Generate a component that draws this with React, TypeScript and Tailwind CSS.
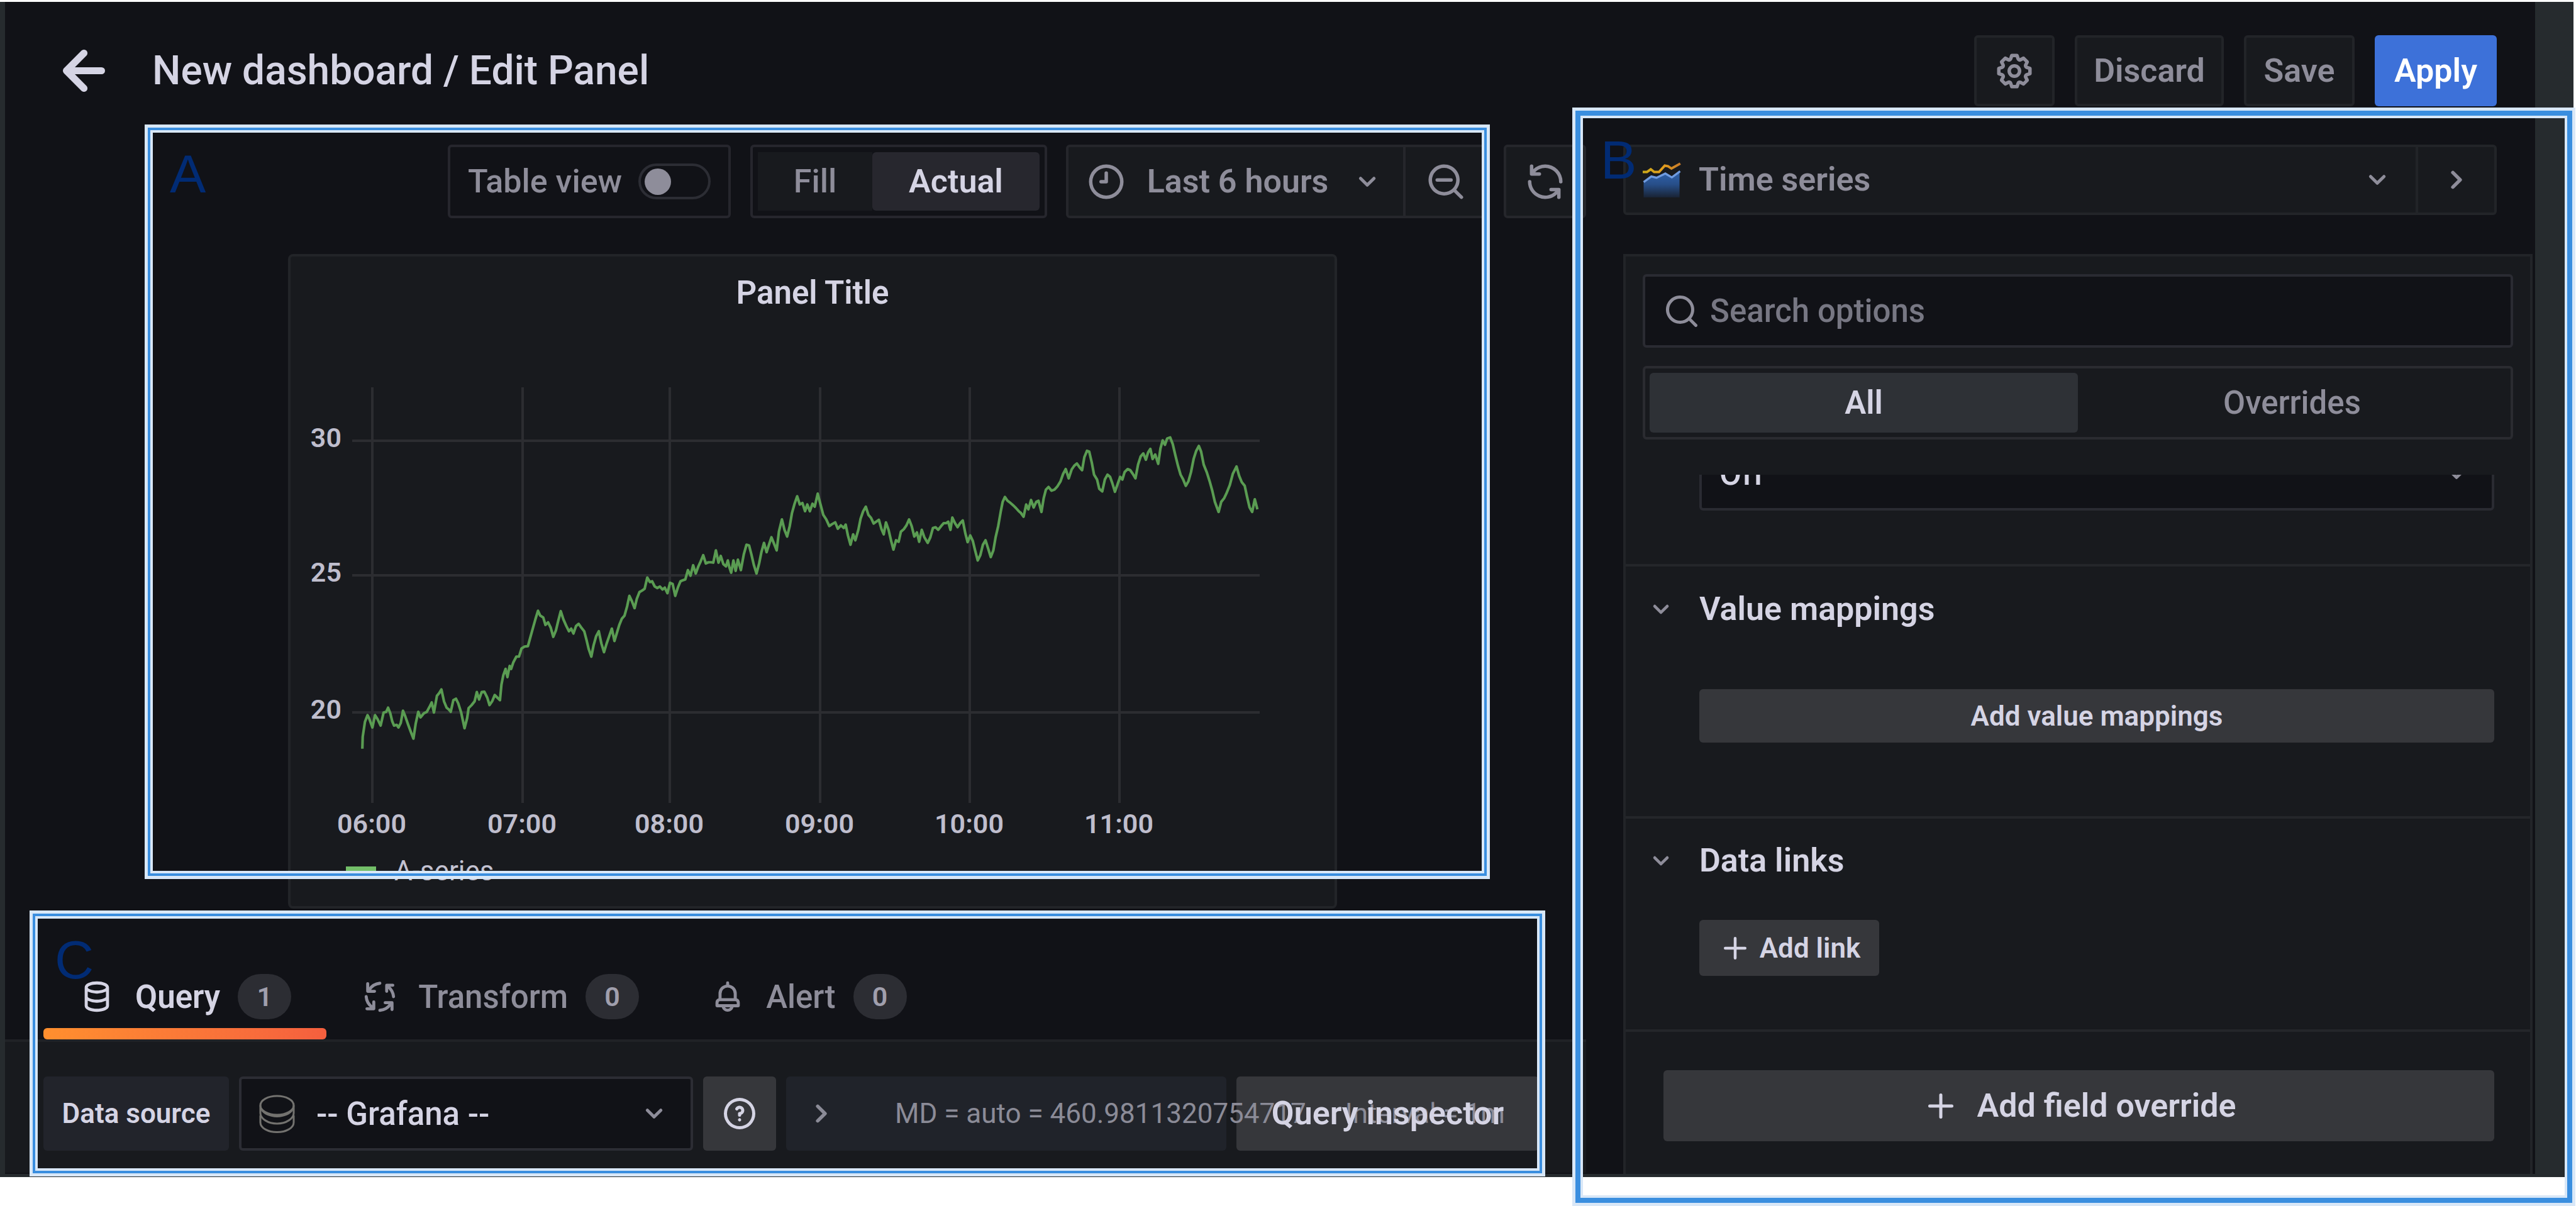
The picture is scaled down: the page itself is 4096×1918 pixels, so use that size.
import React from "react";

const paths = {
  arrowLeft:
    "M17,11H9.41l3.3-3.29a1,1,0,1,0-1.42-1.42l-5,5a1,1,0,0,0-.21.33,1,1,0,0,0,0,.76,1,1,0,0,0,.21.33l5,5a1,1,0,0,0,1.42,0,1,1,0,0,0,0-1.42L9.41,13H17a1,1,0,0,0,0-2Z",
  angleDown:
    "M17,9.17a1,1,0,0,0-1.41,0L12,12.71,8.46,9.17a1,1,0,0,0-1.41,0,1,1,0,0,0,0,1.42l4.24,4.24a1,1,0,0,0,1.42,0L17,10.59A1,1,0,0,0,17,9.17Z",
  angleRight:
    "M14.83,11.29,10.59,7.05a1,1,0,0,0-1.42,0,1,1,0,0,0,0,1.41L12.71,12,9.17,15.54a1,1,0,0,0,0,1.41,1,1,0,0,0,.71.29,1,1,0,0,0,.71-.29l4.24-4.24A1,1,0,0,0,14.83,11.29Z",
  plus: "M19,11H13V5a1,1,0,0,0-2,0v6H5a1,1,0,0,0,0,2h6v6a1,1,0,0,0,2,0V13h6a1,1,0,0,0,0-2Z",
  search:
    "M21.71,20.29,18,16.61A9,9,0,1,0,16.61,18l3.68,3.68a1,1,0,0,0,1.42,0A1,1,0,0,0,21.71,20.29ZM11,18a7,7,0,1,1,7-7A7,7,0,0,1,11,18Z",
  searchMinus:
    "M21.71,20.29,18,16.61A9,9,0,1,0,16.61,18l3.68,3.68a1,1,0,0,0,1.42,0A1,1,0,0,0,21.71,20.29ZM11,18a7,7,0,1,1,7-7A7,7,0,0,1,11,18Zm4-8H7a1,1,0,0,0,0,2h8a1,1,0,0,0,0-2Z",
  clock:
    "M12,2A10,10,0,1,0,22,12,10,10,0,0,0,12,2Zm0,18a8,8,0,1,1,8-8A8,8,0,0,1,12,20ZM12,6a1,1,0,0,0-1,1v4H9a1,1,0,0,0,0,2h3a1,1,0,0,0,1-1V7A1,1,0,0,0,12,6Z",
  sync:
    "M19.91,15.51H15.38a1,1,0,0,0,0,2h2.4A8,8,0,0,1,4,12a1,1,0,1,0-2,0,10,10,0,0,0,16.88,7.23V21a1,1,0,0,0,2,0V16.5A1,1,0,0,0,19.91,15.51ZM12,2A10,10,0,0,0,5.12,4.77V3a1,1,0,0,0-2,0V7.5a1,1,0,0,0,1,1h4.5a1,1,0,0,0,0-2H6.22A8,8,0,0,1,20,12a1,1,0,0,0,2,0A10,10,0,0,0,12,2Z",
  cog:
    "M21.32,9.55l-1.89-.63.89-1.78A1,1,0,0,0,20.13,6L18,3.87a1,1,0,0,0-1.15-.19l-1.78.89-.63-1.89A1,1,0,0,0,13.5,2h-3a1,1,0,0,0-.95.68L8.92,4.57,7.14,3.68A1,1,0,0,0,6,3.87L3.87,6a1,1,0,0,0-.19,1.15l.89,1.78-1.89.63A1,1,0,0,0,2,10.5v3a1,1,0,0,0,.68.95l1.89.63-.89,1.78A1,1,0,0,0,3.87,18L6,20.13a1,1,0,0,0,1.15.19l1.78-.89.63,1.89a1,1,0,0,0,.95.68h3a1,1,0,0,0,.95-.68l.63-1.89,1.78.89A1,1,0,0,0,18,20.13L20.13,18a1,1,0,0,0,.19-1.15l-.89-1.78,1.89-.63A1,1,0,0,0,22,13.5v-3A1,1,0,0,0,21.32,9.55ZM20,12.78l-1.2.4A2,2,0,0,0,17.64,16l.57,1.14-1.1,1.1L16,17.64a2,2,0,0,0-2.79,1.16l-.4,1.2H11.22l-.4-1.2A2,2,0,0,0,8,17.64l-1.14.57-1.1-1.1L6.36,16A2,2,0,0,0,5.2,13.18L4,12.78V11.22l1.2-.4A2,2,0,0,0,6.36,8L5.79,6.89l1.1-1.1L8,6.36A2,2,0,0,0,10.82,5.2l.4-1.2h1.56l.4,1.2A2,2,0,0,0,16,6.36l1.14-.57,1.1,1.1L17.64,8a2,2,0,0,0,1.16,2.79l1.2.4ZM12,8a4,4,0,1,0,4,4A4,4,0,0,0,12,8Zm0,6a2,2,0,1,1,2-2A2,2,0,0,1,12,14Z",
  question:
    "M11.29,15.29a1.58,1.58,0,0,0-.12.15.76.76,0,0,0-.09.18.64.64,0,0,0-.06.18,1.36,1.36,0,0,0,0,.2.84.84,0,0,0,.08.38.9.9,0,0,0,.54.54.94.94,0,0,0,.76,0,.9.9,0,0,0,.54-.54A1,1,0,0,0,13,16a1,1,0,0,0-.29-.71A1,1,0,0,0,11.29,15.29ZM12,2A10,10,0,1,0,22,12,10,10,0,0,0,12,2Zm0,18a8,8,0,1,1,8-8A8,8,0,0,1,12,20ZM12,7A3,3,0,0,0,9.4,8.5a1,1,0,1,0,1.73,1A1,1,0,0,1,12,9a1,1,0,0,1,0,2,1,1,0,0,0-1,1v1a1,1,0,0,0,2,0v-.18A3,3,0,0,0,12,7Z",
  bell:
    "M18,13.18V10a6,6,0,0,0-5-5.91V3a1,1,0,0,0-2,0V4.09A6,6,0,0,0,6,10v3.18A3,3,0,0,0,4,16v2a1,1,0,0,0,1,1H8.14a4,4,0,0,0,7.72,0H19a1,1,0,0,0,1-1V16A3,3,0,0,0,18,13.18ZM8,10a4,4,0,0,1,8,0v3H8Zm4,10a2,2,0,0,1-1.72-1h3.44A2,2,0,0,1,12,20Zm6-3H6V16a1,1,0,0,1,1-1H17a1,1,0,0,1,1,1Z",
  database:
    "M12,2C8,2,4,3.37,4,6V18c0,2.63,4,4,8,4s8-1.37,8-4V6C20,3.37,16,2,12,2Zm6,16c0,.71-2.28,2-6,2s-6-1.29-6-2V14.73A13.16,13.16,0,0,0,12,16a13.16,13.16,0,0,0,6-1.27Zm0-6c0,.71-2.28,2-6,2s-6-1.29-6-2V8.73A13.16,13.16,0,0,0,12,10a13.16,13.16,0,0,0,6-1.27ZM12,8C8.28,8,6,6.71,6,6s2.28-2,6-2,6,1.29,6,2S15.72,8,12,8Z",
};

function Icon({ name, className = "size-[60px]" }: { name: keyof typeof paths; className?: string }) {
  return (
    <svg viewBox="0 0 24 24" fill="currentColor" aria-hidden="true" className={`shrink-0 ${className}`}>
      <path d={paths[name]} />
    </svg>
  );
}

function ProcessIcon() {
  return (
    <svg viewBox="0 0 24 24" fill="none" stroke="currentColor" strokeWidth="2" strokeLinecap="round" strokeLinejoin="round" aria-hidden="true" className="size-[58px] shrink-0">
      <path d="M4 3.5V8.500H8.500M5 7.5A9.5 9.5 0 0 1 12 3.200" />
      <path d="M20.5 4.5H16.500V8.500M17.500 5.500A9.5 9.5 0 0 1 21 12" />
      <path d="M15.5 16H20V20.5M19 17A9.5 9.5 0 0 1 12 21" />
      <path d="M3.5 20H8V15.5M7 19A9.5 9.5 0 0 1 3 12" />
    </svg>
  );
}

function GrafanaSourceIcon() {
  return (
    <svg viewBox="0 0 57 61" fill="none" stroke="#73726f" strokeWidth="3" aria-hidden="true" className="h-[61px] w-[57px] shrink-0">
      <ellipse cx="28.5" cy="17" rx="26.5" ry="15" />
      <path d="M2 17V29C2 38 14 46 28.5 46S55 38 55 29V17" />
      <path d="M4 24C8 30 17 34.500 28.500 34.500S49 30 53 24" />
      <path d="M2 33V44C2 53 14 59.500 28.500 59.500S55 53 55 44V33" />
    </svg>
  );
}

function TimeSeriesIcon() {
  return (
    <svg viewBox="0 0 200 185" fill="none" aria-hidden="true" className="h-[57px] w-[61px] shrink-0">
      <defs>
        <linearGradient id="area" x1="0" y1="0" x2="0" y2="1">
          <stop offset="0" stopColor="#3063ad" />
          <stop offset="0.5" stopColor="#274e88" />
          <stop offset="1" stopColor="#192334" />
        </linearGradient>
        <linearGradient id="gold" x1="0" y1="0" x2="1" y2="0">
          <stop offset="0" stopColor="#c9a91a" />
          <stop offset="0.5" stopColor="#e3a01c" />
          <stop offset="1" stopColor="#c87b2a" />
        </linearGradient>
      </defs>
      <path d="M5 103L45 73L72 80L118 58L152 78L192 48V183H5Z" fill="url(#area)" />
      <path d="M5 103L45 73L72 80L118 58L152 78L195 46" stroke="#6f9be0" strokeWidth="11" />
      <path d="M0 50H22L42 36L60 50H85L115 17L132 20L150 32L196 6" stroke="url(#gold)" strokeWidth="13" />
    </svg>
  );
}

const seriesA =
  "265,1067 266,1035 272,995 279,977 283,985 292,1010 299,977 306,988 314,1005 322,970 329,968 334,957 340,972 345,993 350,1005 357,1003 362,1010 368,998 374,965 380,980 388,1003 395,1022 402,1040 408,1000 415,968 421,983 430,972 438,968 445,955 451,943 457,970 465,925 471,918 477,908 484,940 491,957 497,962 502,968 509,937 516,933 522,945 530,970 539,1012 546,985 550,958 558,950 566,940 572,915 578,935 585,915 592,914 600,930 606,950 613,940 620,923 627,930 634,937 638,895 643,870 649,853 654,875 660,845 664,853 670,835 678,820 685,820 692,798 700,793 709,792 715,770 722,745 729,720 736,697 742,710 750,715 756,735 763,728 770,742 777,767 784,750 790,725 797,698 804,720 812,738 819,752 825,745 831,758 838,738 845,732 852,742 860,752 866,775 872,800 879,820 885,790 892,765 899,752 906,785 913,808 920,785 927,765 934,745 941,778 948,755 954,735 961,718 968,710 975,685 981,657 988,672 995,690 1001,665 1008,647 1015,643 1022,638 1029,608 1036,620 1042,618 1049,632 1056,636 1063,632 1070,640 1076,635 1083,650 1090,622 1097,625 1104,657 1111,635 1118,618 1125,615 1131,613 1138,588 1145,603 1152,575 1159,597 1166,578 1172,565 1179,548 1186,570 1193,567 1200,567 1206,568 1213,535 1220,568 1226,550 1233,572 1240,578 1245,562 1249,580 1254,595 1260,562 1266,590 1272,560 1280,588 1288,545 1295,520 1302,522 1308,545 1315,575 1322,597 1329,570 1335,540 1342,515 1349,540 1356,518 1362,500 1368,515 1376,535 1382,485 1390,452 1397,480 1404,498 1411,470 1417,435 1424,410 1431,390 1438,412 1445,408 1452,430 1458,412 1465,430 1472,410 1478,418 1486,383 1493,410 1501,440 1509,452 1517,470 1524,465 1533,460 1540,477 1548,468 1556,475 1561,466 1567,495 1574,520 1581,492 1587,508 1595,480 1601,450 1608,430 1615,418 1622,440 1629,448 1636,463 1643,458 1650,453 1657,478 1663,492 1669,460 1676,480 1683,510 1689,533 1696,508 1703,512 1709,485 1717,478 1724,468 1731,452 1738,470 1745,498 1752,487 1758,512 1765,480 1772,500 1781,515 1788,500 1795,475 1802,473 1809,480 1817,470 1824,462 1831,462 1836,458 1842,480 1847,447 1854,462 1861,473 1868,462 1875,455 1882,490 1888,513 1895,495 1902,510 1908,535 1915,562 1922,548 1929,520 1936,508 1943,530 1950,553 1957,535 1963,500 1970,470 1977,430 1982,405 1988,392 1995,402 2003,408 2011,415 2018,422 2025,430 2031,435 2038,445 2045,412 2051,425 2058,400 2065,420 2072,405 2078,402 2086,432 2092,395 2098,372 2105,365 2113,375 2121,372 2129,363 2137,350 2144,330 2151,317 2159,342 2167,318 2174,308 2181,302 2188,312 2195,320 2201,285 2208,268 2214,270 2221,300 2227,332 2235,345 2241,370 2249,377 2256,345 2263,332 2270,338 2276,355 2283,378 2291,355 2297,338 2303,345 2309,325 2317,317 2324,320 2331,330 2338,342 2345,305 2352,283 2359,275 2366,292 2372,272 2378,263 2384,290 2391,278 2399,303 2405,262 2411,240 2417,252 2423,235 2431,232 2438,250 2445,280 2452,308 2459,332 2466,345 2473,362 2480,350 2487,325 2494,290 2501,268 2508,255 2514,270 2521,305 2529,325 2537,350 2544,375 2551,405 2561,432 2568,405 2576,395 2583,380 2591,360 2599,330 2609,310 2616,335 2623,352 2631,362 2637,390 2644,420 2651,432 2658,398 2665,425";

const hours = [
  { label: "06:00", x: 130 },
  { label: "07:00", x: 369 },
  { label: "08:00", x: 603 },
  { label: "09:00", x: 842 },
  { label: "10:00", x: 1080 },
  { label: "11:00", x: 1318 },
];
const levels = [
  { label: "30", y: 179 },
  { label: "25", y: 393 },
  { label: "20", y: 611 },
];

function Chart() {
  return (
    <svg viewBox="0 0 1660 822" className="w-full" role="img" aria-label="A-series over the last 6 hours">
      <g stroke="#2c2d31" strokeWidth="4">
        {hours.map((h) => (
          <line key={h.label} x1={h.x} x2={h.x} y1="94" y2="755" />
        ))}
        {levels.map((l) => (
          <line key={l.label} x1="98" x2="1541" y1={l.y} y2={l.y} />
        ))}
      </g>
      <polyline points={seriesA} transform="translate(-43 36) scale(0.593)" fill="none" stroke="#5a9c52" strokeWidth="7" strokeLinejoin="round" />
      <g fill="#bfbecd" fontSize="43" fontWeight="600">
        {levels.map((l) => (
          <text key={l.label} x="81" y={l.y + 10} textAnchor="end">
            {l.label}
          </text>
        ))}
        {hours.map((h) => (
          <text key={h.label} x={h.x - 1} y="803" textAnchor="middle">
            {h.label}
          </text>
        ))}
      </g>
    </svg>
  );
}

function Toolbar() {
  return (
    <div className="mt-[61px] flex h-[117px] justify-end whitespace-nowrap text-[52px] font-semibold leading-none text-[#8e8d9a]">
      <label className="flex w-[450px] items-center justify-between rounded-md border-4 border-[#26262d] bg-[#111217] pr-[28px] pl-[28px] font-medium">
        Table view
        <input
          type="checkbox"
          role="switch"
          className="h-[57px] w-[115px] appearance-none rounded-full border-4 border-[#2c2d34] bg-[#111217] before:mt-[4px] before:ml-[6px] before:block before:size-[42px] before:rounded-full before:bg-[#8e8d9a]"
        />
      </label>
      <div role="radiogroup" aria-label="Size" className="ml-[31px] flex w-[472px] rounded-md border-4 border-[#26262d] p-[8px]">
        <button role="radio" aria-checked="false" className="flex-1 bg-[#181a1e] font-medium">Fill</button>
        <button role="radio" aria-checked="true" className="w-[266px] rounded-md bg-[#27272e] text-[#d5d4e4]">Actual</button>
      </div>
      <button className="ml-[30px] flex w-[540px] items-center justify-between rounded-l-md border-4 border-[#25262b] bg-[#181a1e] px-[27px]">
        <Icon name="clock" className="size-[66px]" />
        Last 6 hours
        <Icon name="angleDown" />
      </button>
      <button aria-label="Zoom out time range" className="flex w-[131px] items-center justify-center rounded-r-md border-4 border-l-0 border-[#25262b] bg-[#181a1e]">
        <Icon name="searchMinus" className="size-[66px]" />
      </button>
      <button aria-label="Refresh" className="ml-[25px] flex w-[131px] items-center justify-center rounded-md border-4 border-[#25262b] bg-[#181a1e]">
        <Icon name="sync" className="size-[66px]" />
      </button>
    </div>
  );
}

function Tab({ icon, label, count, active = false }: { icon: React.ReactNode; label: string; count: number; active?: boolean }) {
  return (
    <button role="tab" aria-selected={active} className={active ? "text-[#d5d4e4]" : "text-[#8e8d9a]"}>
      <span className="flex h-[100px] items-center px-14">
        {icon}
        <span className={active ? "ml-8 font-semibold" : "ml-8 font-medium"}>{label}</span>
        <span className="ml-7 flex h-[72px] w-[85px] items-center justify-center rounded-full bg-[#2c2d33] text-[43px] font-semibold text-[#a09fad]">{count}</span>
      </span>
      <span className={active ? "block h-[18px] rounded-md bg-linear-to-r from-[#ff8f2e] to-[#f55f3e]" : "block h-[18px]"} />
    </button>
  );
}

function QueryPane() {
  return (
    <section>
      <div role="tablist" className="flex pt-[90px] pl-[61px] text-[51px] leading-none">
        <Tab icon={<Icon name="database" className="size-[58px]" />} label="Query" count={1} active />
        <Tab icon={<ProcessIcon />} label="Transform" count={0} />
        <Tab icon={<Icon name="bell" className="size-[58px]" />} label="Alert" count={0} />
      </div>
      <div className="border-t-4 border-[#202226] bg-[#181a1e] pt-[55px] pr-[75px] pb-[35px] pl-[61px]">
        <div className="flex h-[118px] gap-4 whitespace-nowrap leading-none text-[#d5d4e4]">
          <label htmlFor="source" className="flex w-[295px] items-center justify-center rounded-md bg-[#22242b] text-[44px] font-semibold">
            Data source
          </label>
          <div className="relative flex flex-1 items-center rounded-md border-4 border-[#2c2d34] bg-[#111217] pl-[28px]">
            <GrafanaSourceIcon />
            <select id="source" className="h-full flex-1 appearance-none bg-transparent pl-[34px] text-[51px] font-medium text-[#d5d4e4]">
              <option>-- Grafana --</option>
            </select>
            <span className="pointer-events-none absolute right-[28px] text-[#8e8d9a]">
              <Icon name="angleDown" />
            </span>
          </div>
          <button aria-label="Help" className="flex w-[116px] items-center justify-center rounded-md bg-[#36373b]">
            <Icon name="question" />
          </button>
          <button className="flex w-[700px] items-center rounded-md bg-[#20232a] pl-[23px] text-[44px] text-[#8b8b97]">
            <Icon name="angleRight" className="size-[66px]" />
            <span className="relative z-10 ml-[84px]">MD = auto = 460.9811320754717</span>
            <span className="relative z-10 ml-[62px]">Interval = 1m</span>
          </button>
          <button className="w-[481px] rounded-md bg-[#36373b] text-[52px] font-semibold">
            <span className="relative z-20">Query inspector</span>
          </button>
        </div>
      </div>
    </section>
  );
}

function SectionTitle({ children }: { children: React.ReactNode }) {
  return (
    <h3 className="flex h-[70px] items-center font-semibold">
      <button className="flex items-center text-[52px]">
        <span className="w-[89px] text-[#8e8d9a]">
          <Icon name="angleDown" className="size-14" />
        </span>
        {children}
      </button>
    </h3>
  );
}

function OptionsPane() {
  return (
    <aside className="flex w-[1509px] flex-col pr-[4px] pl-[59px] leading-none text-[#d5d4e4]">
      <div className="mt-[61px] mr-[57px] flex h-[112px] text-[#8e8d9a]">
        <button className="flex flex-1 items-center rounded-l-md border-4 border-[#222428] bg-[#181a1e] pr-[31px] pl-[27px] text-[52px] font-semibold">
          <TimeSeriesIcon />
          <span className="ml-[28px] flex-1 text-left">Time series</span>
          <Icon name="angleDown" />
        </button>
        <button aria-label="Hide options" className="flex w-[125px] items-center justify-center rounded-r-md border-4 border-l-0 border-[#222428] bg-[#181a1e]">
          <Icon name="angleRight" className="size-[66px]" />
        </button>
      </div>

      <div className="mt-[62px] flex-1 border-x-4 border-t-4 border-[#222428] bg-[#181a1e]">
        <div className="px-[27px] pt-[28px] pb-[56px]">
          <label className="flex h-[117px] items-center rounded-md border-4 border-[#2a2b32] bg-[#111217] pl-[28px] text-[#8e8d9a]">
            <Icon name="search" />
            <input
              type="search"
              aria-label="Search options"
              placeholder="Search options"
              className="ml-[15px] h-full flex-1 bg-transparent text-[51px] font-medium placeholder:text-[#777783]"
            />
          </label>
          <div role="radiogroup" aria-label="Options filter" className="mt-[29px] flex h-[117px] rounded-md border-4 border-[#2a2b30] p-[7px] text-[51px]">
            <button role="radio" aria-checked="true" className="flex-1 rounded-md bg-[#2e3136] font-semibold">All</button>
            <button role="radio" aria-checked="false" className="flex-1 font-medium text-[#8e8d9a]">Overrides</button>
          </div>
        </div>

        <div className="overflow-hidden pr-[57px] pb-[85px] pl-[117px]">
          <div className="relative -mt-[60px] flex h-[117px] items-center rounded-md border-4 border-[#2a2b32] bg-[#111217]">
            <select aria-label="Mode" className="h-full flex-1 appearance-none bg-transparent pl-[28px] text-[51px] font-medium text-[#d5d4e4]">
              <option>Off</option>
            </select>
            <span className="pointer-events-none absolute right-[26px] text-[#8e8d9a]">
              <Icon name="angleDown" />
            </span>
          </div>
        </div>

        <section className="border-t-4 border-[#24262a] pt-[33px] pr-[57px] pb-[117px] pl-[28px]">
          <SectionTitle>Value mappings</SectionTitle>
          <div className="mt-[92px] pl-[89px]">
            <button className="h-[85px] w-full rounded-md bg-[#36373b] text-[44px] font-semibold">Add value mappings</button>
          </div>
        </section>

        <section className="border-t-4 border-[#24262a] pt-[32px] pr-[57px] pb-[85px] pl-[28px]">
          <SectionTitle>Data links</SectionTitle>
          <div className="mt-[59px] pl-[89px]">
            <button className="flex h-[89px] w-[286px] items-center justify-center gap-[12px] rounded-md bg-[#36373b] text-[44px] font-semibold">
              <Icon name="plus" className="size-[54px]" />
              Add link
            </button>
          </div>
        </section>

        <div className="border-t-4 border-[#24262a] pt-[61px] pr-[57px] pb-[52px] pl-[60px]">
          <button className="flex h-[113px] w-full items-center justify-center gap-[28px] rounded-md bg-[#36373b] text-[52px] font-semibold">
            <Icon name="plus" />
            Add field override
          </button>
        </div>
      </div>
    </aside>
  );
}

function Header() {
  return (
    <header className="flex h-[166px] items-end pr-[61px] pl-[92px] leading-none">
      <button aria-label="Go back" className="flex h-[113px] items-center text-[#d5d4e4]">
        <svg viewBox="6 6 12 12" fill="currentColor" aria-hidden="true" className="size-[67px]">
          <path d={paths.arrowLeft} />
        </svg>
      </button>
      <h1 className="ml-[75px] flex h-[113px] flex-1 items-center text-[64px] font-medium text-[#d5d4e4]">New dashboard / Edit Panel</h1>
      <div className="flex h-[113px] gap-8 text-[52px] font-semibold text-[#8e8d9a]">
        <button aria-label="Dashboard settings" className="flex w-[128px] items-center justify-center rounded-md border-4 border-[#222428] bg-[#181a1e]">
          <Icon name="cog" className="size-[66px]" />
        </button>
        <button className="w-[237px] rounded-md border-4 border-[#222428] bg-[#181a1e]">Discard</button>
        <button className="w-[176px] rounded-md border-4 border-[#222428] bg-[#181a1e]">Save</button>
        <button className="w-[194px] rounded-md bg-[#3d71d9] text-white">Apply</button>
      </div>
    </header>
  );
}

function Callout({ className, line = "border-4" }: { className: string; line?: string }) {
  return (
    <div className={`pointer-events-none absolute z-30 border-[5px] border-[#d8e7f7] ${className}`}>
      <div className={`h-full border-[#3a8edf] ${line}`}>
        <div className="h-full border-4 border-[#d8e7f7]" />
      </div>
    </div>
  );
}

function CalloutLetter({ className, children }: { className: string; children: string }) {
  return (
    <span className={`pointer-events-none absolute z-30 font-['Liberation_Sans',Arial,sans-serif] text-[86px] leading-none text-[#012b74] ${className}`}>
      {children}
    </span>
  );
}

export default function App() {
  return (
    <div className="relative min-h-screen bg-white pt-[3px] pr-1 pb-[46px] font-[Roboto,sans-serif]">
      <div className="flex bg-[#262b2e] pr-[61px] pb-[5px] pl-2">
        <main className="min-w-0 flex-1 bg-[#111217]">
          <Header />
          <div className="flex">
            <div className="min-w-0 flex-1">
              <Toolbar />
              <section className="mt-[57px] mr-[396px] ml-[450px] rounded-lg border-4 border-[#222428] bg-[#181a1e] pb-[15px]">
                <h2 className="flex h-[114px] items-center justify-center text-[51px] leading-none font-semibold text-[#d5d4e4]">Panel Title</h2>
                <Chart />
                <div className="flex h-[82px] items-center pl-[88px] text-[44px] leading-none text-[#c3c2d1]">
                  <span className="mr-[29px] h-[15px] w-[48px] bg-[#73bf69]" />
                  A-series
                </div>
              </section>
              <QueryPane />
            </div>
            <OptionsPane />
          </div>
        </main>
      </div>

      <Callout className="top-[198px] right-[1727px] left-[230px] h-[1200px]" />
      <Callout className="top-[171px] right-px bottom-0 w-[1595px]" line="border-8" />
      <Callout className="top-[1448px] right-[1639px] left-[47px] h-[423px]" />
      <CalloutLetter className="top-[233px] left-[270px]">A</CalloutLetter>
      <CalloutLetter className="top-[211px] left-[2545px]">B</CalloutLetter>
      <CalloutLetter className="top-[1483px] left-[87px]">C</CalloutLetter>
    </div>
  );
}
